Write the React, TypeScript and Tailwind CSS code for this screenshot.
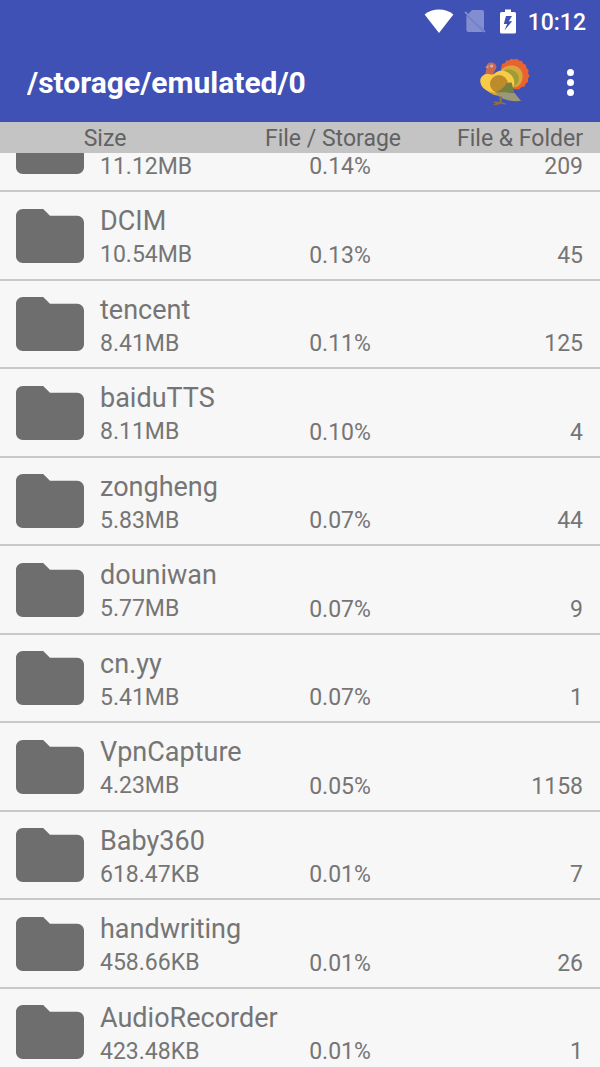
import { useLayoutEffect, useRef } from 'react';

interface FolderEntry {
  id: number;
  name?: string;
  size: string;
  share: string;
  count: number;
}

const entries: FolderEntry[] = [
  { id: 1, size: '11.12MB', share: '0.14%', count: 209 },
  { id: 2, name: 'DCIM', size: '10.54MB', share: '0.13%', count: 45 },
  { id: 3, name: 'tencent', size: '8.41MB', share: '0.11%', count: 125 },
  { id: 4, name: 'baiduTTS', size: '8.11MB', share: '0.10%', count: 4 },
  { id: 5, name: 'zongheng', size: '5.83MB', share: '0.07%', count: 44 },
  { id: 6, name: 'douniwan', size: '5.77MB', share: '0.07%', count: 9 },
  { id: 7, name: 'cn.yy', size: '5.41MB', share: '0.07%', count: 1 },
  { id: 8, name: 'VpnCapture', size: '4.23MB', share: '0.05%', count: 1158 },
  { id: 9, name: 'Baby360', size: '618.47KB', share: '0.01%', count: 7 },
  { id: 10, name: 'handwriting', size: '458.66KB', share: '0.01%', count: 26 },
  { id: 11, name: 'AudioRecorder', size: '423.48KB', share: '0.01%', count: 1 },
];

const INITIAL_SCROLL = 49;

const WifiIcon = () => (
  <svg className="w-[30px] h-[24px]" viewBox="0 0 30 24" fill="currentColor">
    <path d="M15 24 L0.6 5.6 C4.6 2.2 9.6 0.5 15 0.5 C20.4 0.5 25.4 2.2 29.4 5.6 Z" />
  </svg>
);

const NoSimIcon = () => (
  <svg className="w-[22px] h-[24px] opacity-35" viewBox="0 0 22 24" fill="currentColor">
    <path d="M3.5 5.5 L8 1 H18 Q20 1 20 3 V20.5 L2.8 4.8 Z" />
    <path d="M2.4 6 L19 22.6 Q18.6 23 18 23 H4.4 Q2.4 23 2.4 21 Z" />
    <path d="M0.4 3.4 L1.6 2.2 L21.6 22.4 L20.4 23.6 Z" />
  </svg>
);

const BatteryIcon = () => (
  <svg className="w-[16px] h-[25px]" viewBox="0 0 16 25" fill="currentColor">
    <path
      fillRule="evenodd"
      d="M5 0.5 H11 V3 H14.5 Q16 3 16 4.5 V23 Q16 24.5 14.5 24.5 H1.5 Q0 24.5 0 23 V4.5 Q0 3 1.5 3 H5 Z M6 7 L3.8 15 H7.2 L4.4 21.6 L12.2 12.2 H8.8 L12 7 Z"
    />
  </svg>
);

const TurkeyIcon = () => (
  <svg className="w-[50px] h-[48px]" viewBox="0 0 50 48">
    {/* tail fan */}
    <path
      fill="#e8632f"
      d="M21 11 L22 6 L25 5 L26 2.4 L29 2.4 L31 0.8 L34 1.6 L37 0.8 L39 2.6 L42 3 L43 5.6 L46 7 L46.4 10 L48.6 12 L48 15 L49.6 18 L48 20.5 L48 24 L45.6 25.6 L44.6 28.6 L41.6 29 L39 31.4 L34 31 L24 20 Z"
    />
    <path fill="#d9a63c" d="M21 12 C24 8.5 29 7 33.5 7.6 C39 8.4 43 13 42.6 19 C42.3 24 40 28 35 29.5 L23 17 Z" />
    <path fill="#9c9d35" d="M24 12.5 C29 10.4 35 12 37.6 16 C40 20 38.6 25 35 28 L24 19 Z" />
    {/* head */}
    <path fill="#c9694f" d="M5 17 L6.4 11 C6 6 8 4.4 11 4.4 C14.5 4.4 16.8 6.6 16.4 9.6 C16 12 14 13 13.4 17 Z" />
    <path fill="#dcae7c" d="M8.4 7.4 L5 9.4 L8.6 9.8 Z" />
    <circle cx="11.6" cy="8" r="1.6" fill="#c9b6bd" />
    {/* body and wing */}
    <path
      fill="#f9ca46"
      d="M0.4 21 C1.6 18 4 16 7 16 C10 16 12 17.4 14 16 C17 13 22 11.6 26 13.4 C31 15.4 34.6 20 34.4 25 C34 32 28 35.6 21 36 C12 36.4 3 32 1 26.5 C0.2 24.6 0 22.8 0.4 21 Z"
    />
    <path fill="#d6a730" d="M7 32.4 C12 35 23 35.6 30 32 L26 36.8 C19 38.6 12 37.4 7 32.4 Z" />
    <circle cx="19" cy="26" r="9" fill="#bd8b2c" />
    <path fill="#75803f" d="M15.4 34.4 C21 32 25 29 26.6 25 L31.6 24.4 L34.4 34.8 Z" />
    <path fill="#9a9878" d="M15.6 34.6 L34.4 34.8 L41 43 C32 43.6 21 42.6 15.6 34.6 Z" />
    <path
      fill="#8f7042"
      d="M19.4 38 L22 38.8 L21.8 44 L26 45.6 L25.6 46.8 L21 45.8 L16 47.2 L13 46.6 L16 45.6 L13.6 44.6 L14 43.6 L19.6 44 Z"
    />
  </svg>
);

const FolderIcon = () => (
  <svg className="w-[68px] h-[54px] shrink-0 text-[#6e6e6e]" viewBox="2 4 20 16" preserveAspectRatio="none" fill="currentColor">
    <path d="M10 4H4c-1.1 0-2 .9-2 2v12c0 1.1.9 2 2 2h16c1.1 0 2-.9 2-2V8c0-1.1-.9-2-2-2h-8l-2-2z" />
  </svg>
);

const FolderRow = ({ entry }: { entry: FolderEntry }) => (
  <tr className="h-[88px] even:h-[89px]">
    <td className="border-b-2 border-[#c8c8c8] p-0 pl-4">
      <div className="flex items-center gap-4">
        <FolderIcon />
        <div className="whitespace-nowrap pt-1">
          <div className="h-[34px] text-[27px] leading-[34px]">{entry.name}</div>
          <div className="text-[23px] leading-[33px]">{entry.size}</div>
        </div>
      </div>
    </td>
    <td className="border-b-2 border-[#c8c8c8] p-0 pl-[14px] pb-[7px] align-bottom text-center text-[23px] leading-[33px]">
      {entry.share}
    </td>
    <td className="border-b-2 border-[#c8c8c8] p-0 pr-[17px] pb-[7px] align-bottom text-right text-[23px] leading-[33px]">
      {entry.count}
    </td>
  </tr>
);

export default function App() {
  const listRef = useRef<HTMLDivElement>(null);

  useLayoutEffect(() => {
    if (listRef.current) {
      listRef.current.scrollTop = INITIAL_SCROLL;
    }
  }, []);

  return (
    <div className="flex h-screen flex-col bg-[#f7f7f7] font-['Roboto',sans-serif] text-[#757575]">
      <header className="shrink-0 bg-[#3f51b5] text-white">
        <div className="flex h-[42px] items-center justify-end pr-[14px] text-[23px] font-medium">
          <WifiIcon />
          <span className="ml-[10px]"><NoSimIcon /></span>
          <span className="ml-[14px]"><BatteryIcon /></span>
          <span className="ml-3 pt-1">10:12</span>
        </div>
        <div className="flex h-20 items-center pl-[27px] pr-4">
          <h1 className="flex-1 truncate text-[30px] font-bold">/storage/emulated/0</h1>
          <button type="button" aria-label="Turkey">
            <TurkeyIcon />
          </button>
          <button type="button" aria-label="More options" className="ml-[26px] flex w-7 flex-col items-center gap-[3px]">
            <span className="size-[7px] rounded-full bg-white" />
            <span className="size-[7px] rounded-full bg-white" />
            <span className="size-[7px] rounded-full bg-white" />
          </button>
        </div>
      </header>

      <div ref={listRef} className="min-h-0 flex-1 overflow-y-auto [scrollbar-width:none]">
        <table className="w-full table-fixed border-separate border-spacing-0">
          <thead className="sticky top-0 z-10 bg-[#c4c4c4] text-[23px] leading-7 text-[#626262]">
            <tr>
              <th scope="col" className="w-[35%] p-0 pt-[3px] font-normal">Size</th>
              <th scope="col" className="w-[41%] p-0 pt-[3px] font-normal">File / Storage</th>
              <th scope="col" className="w-[24%] whitespace-nowrap p-0 pt-[3px] pr-[17px] text-right font-normal">File &amp; Folder</th>
            </tr>
          </thead>
          <tbody>
            {entries.map((entry) => (
              <FolderRow key={entry.id} entry={entry} />
            ))}
          </tbody>
        </table>
      </div>
    </div>
  );
}
